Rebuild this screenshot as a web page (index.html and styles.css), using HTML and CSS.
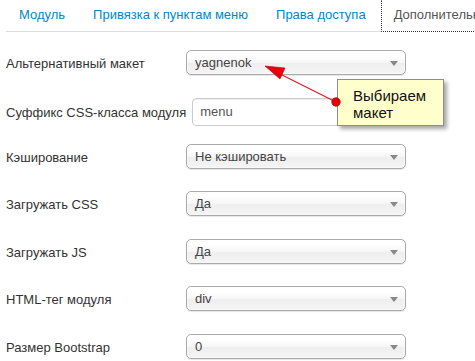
FILE: index.html
```html
<!DOCTYPE html>
<html lang="ru">
<head>
    <meta charset="UTF-8">
    <meta name="viewport" content="width=device-width, initial-scale=1.0">
    <title>Дополнительные параметры модуля</title>
    <link rel="stylesheet" href="styles.css">
</head>
<body>
    <div class="page">
        <ul class="nav-tabs">
            <li><a href="#">Модуль</a></li>
            <li><a href="#">Привязка к пунктам меню</a></li>
            <li><a href="#">Права доступа</a></li>
            <li><a href="#" class="active">Дополнительные параметры</a></li>
        </ul>

        <div class="form">
            <div class="control-group">
                <label class="control-label">Альтернативный макет</label>
                <div class="chzn-single"><span>yagnenok</span><b></b></div>
            </div>
            <div class="control-group input-row">
                <label class="control-label">Суффикс CSS-класса модуля</label>
                <input class="text-input" type="text" value="menu">
            </div>
            <div class="control-group">
                <label class="control-label">Кэширование</label>
                <div class="chzn-single"><span>Не кэшировать</span><b></b></div>
            </div>
            <div class="control-group">
                <label class="control-label">Загружать CSS</label>
                <div class="chzn-single"><span>Да</span><b></b></div>
            </div>
            <div class="control-group">
                <label class="control-label">Загружать JS</label>
                <div class="chzn-single"><span>Да</span><b></b></div>
            </div>
            <div class="control-group">
                <label class="control-label">HTML-тег модуля</label>
                <div class="chzn-single"><span>div</span><b></b></div>
            </div>
            <div class="control-group">
                <label class="control-label">Размер Bootstrap</label>
                <div class="chzn-single"><span>0</span><b></b></div>
            </div>
        </div>

        <!-- выноска с подсказкой -->
        <div class="callout">Выбираем<br>макет</div>
        <svg class="pointer" width="475" height="361" viewBox="0 0 475 361">
            <line x1="336" y1="102" x2="278" y2="73" stroke="#e21a1a" stroke-width="1.2"/>
            <polygon points="265,66 280,79 285,68" fill="#e8000b" stroke="#b00000" stroke-width="0.6"/>
            <circle cx="336" cy="102" r="4.2" fill="#e8000b" stroke="#a00000" stroke-width="0.8"/>
        </svg>
    </div>
</body>
</html>
```

FILE: styles.css
```css
html, body {
    margin: 0;
    padding: 0;
    background: #fff;
    overflow: hidden;
}

body {
    font-family: "Liberation Sans", Arial, sans-serif;
    font-size: 13px;
    color: #333;
}

.page {
    position: relative;
    width: 475px;
    height: 361px;
    overflow: hidden;
}

.nav-tabs {
    display: flex;
    list-style: none;
    margin: 0 0 0 6px;
    padding: 0;
    border-bottom: 1px solid #ddd;
    white-space: nowrap;
}

.nav-tabs li {
    margin-bottom: -1px;
}

.nav-tabs a {
    display: block;
    padding: 5px 12px 7px;
    margin-right: 2px;
    line-height: 18px;
    border: 1px solid transparent;
    color: #0088cc;
    text-decoration: none;
}

.nav-tabs a.active {
    color: #555;
    background: #fff;
    border-left: 1px dotted #333;
    border-bottom: 1px dotted #333;
}

.form {
    padding: 18px 0 0 6px;
}

.control-group {
    display: flex;
    align-items: center;
    gap: 6px;
    height: 25px;
    margin-bottom: 22.5px;
}

.control-group.input-row {
    height: 28px;
    margin-top: 0.5px;
    margin-bottom: 18px;
}

.control-label {
    min-width: 174px;
    padding-top: 2px;
    color: #333;
}

.chzn-single {
    position: relative;
    box-sizing: border-box;
    width: 220px;
    height: 25px;
    padding-left: 8px;
    line-height: 23px;
    color: #444;
    border: 1px solid #aaa;
    border-radius: 5px;
    background: linear-gradient(#fff 20%, #f6f6f6 50%, #eee 52%, #f4f4f4 100%);
    box-shadow: 0 0 3px #fff inset, 0 1px 1px rgba(0, 0, 0, 0.1);
}

.chzn-single b {
    position: absolute;
    right: 7px;
    top: 10px;
    width: 0;
    height: 0;
    border-left: 4px solid transparent;
    border-right: 4px solid transparent;
    border-top: 5px solid #888;
}

.text-input {
    box-sizing: border-box;
    width: 206px;
    height: 28px;
    padding: 4px 7px;
    font-family: inherit;
    font-size: 13px;
    color: #555;
    border: 1px solid #ccc;
    border-radius: 4px;
    box-shadow: inset 0 1px 1px rgba(0, 0, 0, 0.075);
    outline: none;
}

.callout {
    position: absolute;
    left: 337px;
    top: 79px;
    box-sizing: border-box;
    width: 107px;
    height: 47px;
    padding: 7px 0 0 15px;
    font-size: 15px;
    line-height: 17px;
    color: #111;
    background: #ffffcc;
    border: 1px solid #8e8e8e;
    box-shadow: 3px 3px 4px rgba(0, 0, 0, 0.35);
}

.pointer {
    position: absolute;
    left: 0;
    top: 0;
    pointer-events: none;
}
```
